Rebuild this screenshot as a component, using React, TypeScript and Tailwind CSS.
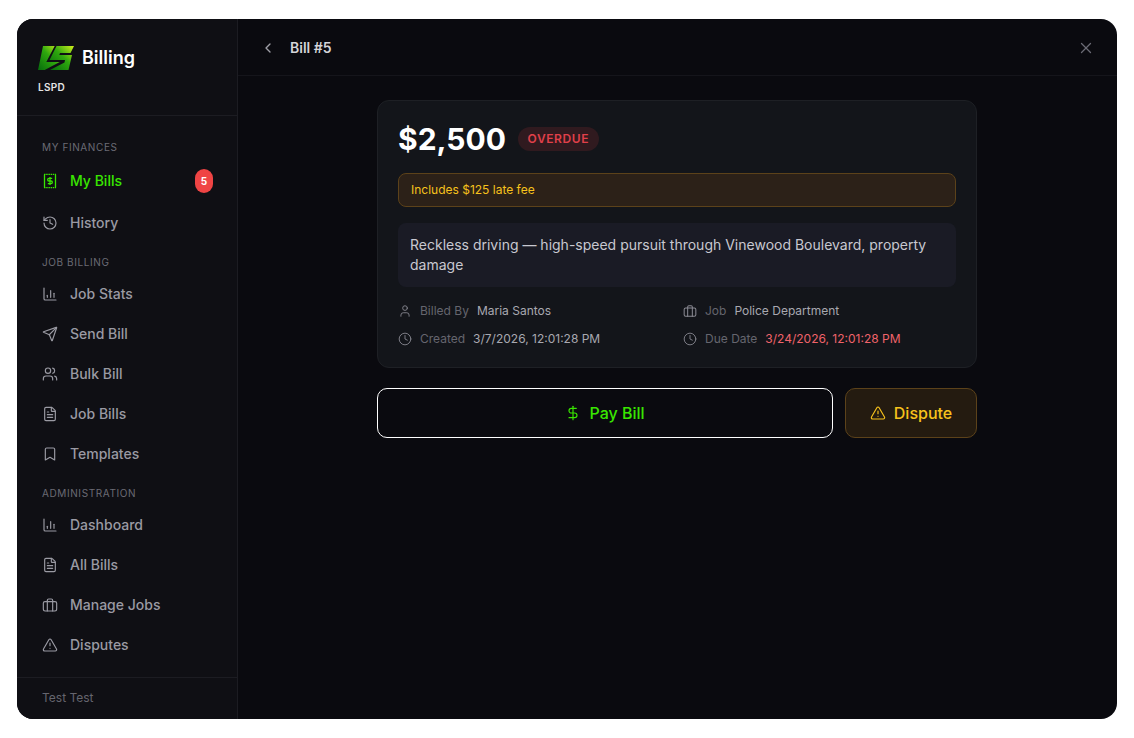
import type { ReactNode } from "react";
import {
  Bookmark,
  ChevronLeft,
  Clock,
  DollarSign,
  FileText,
  History,
  Send,
  TriangleAlert,
  User,
  Users,
  X,
} from "lucide-react";

const Stats = ({ size = 16 }: { size?: number }) => (
  <svg width={size} height={size} viewBox="0 0 24 24" fill="none" stroke="currentColor" strokeWidth={1.75} strokeLinecap="round" strokeLinejoin="round">
    <path d="M3 3v16a2 2 0 0 0 2 2h16" />
    <path d="M8 17v-3" />
    <path d="M13 17V7" />
    <path d="M18 17v-6" />
  </svg>
);

const Jobs = ({ size = 16 }: { size?: number }) => (
  <svg width={size} height={size} viewBox="0 0 24 24" fill="none" stroke="currentColor" strokeWidth={1.75} strokeLinecap="round" strokeLinejoin="round">
    <rect x="2" y="7" width="20" height="14" rx="2.5" />
    <path d="M8 21V5a2 2 0 0 1 2-2h4a2 2 0 0 1 2 2v16" />
  </svg>
);

const BillIcon = () => (
  <svg width={16} height={16} viewBox="0 0 16 16" fill="none" stroke="currentColor">
    <path d="M2.5 1.5v13M13.5 1.5v13" strokeWidth={1.3} />
    <path d="M2 1.3h12M2 14.7h12" strokeWidth={1.3} strokeDasharray="1.5 0.7" />
    <path d="M10.2 5.3H7a1.35 1.35 0 0 0 0 2.7h2a1.35 1.35 0 0 1 0 2.7H5.8M8 4v8" strokeWidth={1.3} />
  </svg>
);

const Logo = () => (
  <svg width={36} height={24} viewBox="0 0 36 24">
    <defs>
      <linearGradient id="lsGrad" x1="0" y1="1" x2="1" y2="0">
        <stop offset="0" stopColor="#056b0c" />
        <stop offset="0.55" stopColor="#2fa80e" />
        <stop offset="1" stopColor="#d2f01c" />
      </linearGradient>
    </defs>
    <path fill="url(#lsGrad)" d="M5 0H16.7L8.3 16H21.7L6.7 24H0Z" />
    <path fill="url(#lsGrad)" d="M18.5 0H36L32.5 7H22L21.3 9H34L30.5 24H12L26.5 16.5L27 14H11.5Z" />
  </svg>
);

function SectionLabel({ children }: { children: ReactNode }) {
  return (
    <div className="mt-3 mb-[5px] px-[5px] h-3.5 text-[10px] leading-[14px] font-normal tracking-[0.06em] uppercase text-[#6b6b75]">
      {children}
    </div>
  );
}

function NavItem({ icon, label }: { icon: ReactNode; label: string }) {
  return (
    <div className="flex h-10 items-center gap-3 pl-[5px] text-sm font-medium text-[#9a9aa3]">
      <span className="flex w-4 justify-center">{icon}</span>
      {label}
    </div>
  );
}

function Meta({ icon, label, value, valueClass }: { icon: ReactNode; label: string; value: string; valueClass: string }) {
  return (
    <div className="flex h-4 items-center text-xs">
      <span className="mr-2 text-[#8a8a93]">{icon}</span>
      <span className="mr-2 text-[#65656e]">{label}</span>
      <span className={valueClass}>{value}</span>
    </div>
  );
}

export default function App() {
  return (
    <div className="h-[738px] w-[1134px] bg-white px-[17px] pt-[19px] font-['Inter',sans-serif]">
      <div className="flex h-[700px] w-[1100px] overflow-hidden rounded-2xl bg-[#0a0a0f]">
        {/* sidebar */}
        <aside className="flex w-[221px] flex-col border-r border-[#1c1c22] bg-[#0f0f14]">
          <div className="h-[97px] border-b border-[#1c1c22] pl-[21px] pt-[27px]">
            <div className="flex h-6 items-center gap-2">
              <Logo />
              <span className="text-lg font-semibold text-white">Billing</span>
            </div>
            <div className="mt-2.5 text-[10px] leading-[14px] font-semibold tracking-[0.03em] text-[#e5e5e5]">LSPD</div>
          </div>

          <nav className="flex-1 pl-5 pr-6 pt-3">
            <SectionLabel>My Finances</SectionLabel>
            <div className="flex h-11 items-center gap-3 pl-[5px] text-sm font-medium text-[#39e600]">
              <span className="flex w-4 justify-center">
                <BillIcon />
              </span>
              <span className="flex-1">My Bills</span>
              <span className="flex h-6 w-[18px] items-center justify-center rounded-full bg-[#ef4444] text-[10px] font-bold text-white">5</span>
            </div>
            <NavItem icon={<History size={16} strokeWidth={1.75} />} label="History" />

            <SectionLabel>Job Billing</SectionLabel>
            <NavItem icon={<Stats />} label="Job Stats" />
            <NavItem icon={<Send size={16} strokeWidth={1.75} />} label="Send Bill" />
            <NavItem icon={<Users size={16} strokeWidth={1.75} />} label="Bulk Bill" />
            <NavItem icon={<FileText size={16} strokeWidth={1.75} />} label="Job Bills" />
            <NavItem icon={<Bookmark size={16} strokeWidth={1.75} />} label="Templates" />

            <SectionLabel>Administration</SectionLabel>
            <NavItem icon={<Stats />} label="Dashboard" />
            <NavItem icon={<FileText size={16} strokeWidth={1.75} />} label="All Bills" />
            <NavItem icon={<Jobs />} label="Manage Jobs" />
            <NavItem icon={<TriangleAlert size={16} strokeWidth={1.75} />} label="Disputes" />
          </nav>

          <div className="flex h-[42px] items-center border-t border-[#1c1c22] pb-0.5 pl-[25px] text-xs text-[#65656e]">Test Test</div>
        </aside>

        {/* main */}
        <main className="flex min-w-0 flex-1 flex-col">
          <header className="flex h-[57px] items-center border-b border-[#15151b] pl-[22px] pr-[22px] pt-0.5">
            <ChevronLeft size={16} strokeWidth={2} className="text-[#a0a0a8]" />
            <span className="ml-3.5 flex-1 text-sm font-semibold text-[#d4d4d8]">Bill #5</span>
            <X size={18} strokeWidth={1.75} className="text-[#6b6b75]" />
          </header>

          <div className="ml-[139px] mt-6 w-[600px]">
            <div className="rounded-xl border border-[#1e2025] bg-[#13151a] p-5">
              <div className="flex h-9 items-center gap-3">
                <span className="text-[30px] font-bold text-white">$2,500</span>
                <span className="flex h-6 items-center rounded-full bg-[#301a1f] px-[9.5px] text-xs font-semibold tracking-[0.05em] text-[#e0404a]">OVERDUE</span>
              </div>

              <div className="mt-4 flex h-[34px] items-center rounded-lg border border-[#5c421a] bg-[#2c2118] px-3 text-xs font-normal text-[#f7c21c]">
                Includes $125 late fee
              </div>

              <div className="mt-4 rounded-lg bg-[#1a1b25] px-3 py-3 text-sm leading-5 font-normal text-[#c8c8d0]">
                Reckless driving — high-speed pursuit through Vinewood Boulevard, property damage
              </div>

              <div className="mt-4 grid grid-cols-[285px_1fr] gap-y-3">
                <Meta icon={<User size={14} strokeWidth={1.5} />} label="Billed By" value="Maria Santos" valueClass="text-[#a8a8b0]" />
                <Meta icon={<Jobs size={14} />} label="Job" value="Police Department" valueClass="text-[#a8a8b0]" />
                <Meta icon={<Clock size={14} strokeWidth={1.5} />} label="Created" value="3/7/2026, 12:01:28 PM" valueClass="text-[#a8a8b0]" />
                <Meta icon={<Clock size={14} strokeWidth={1.5} />} label="Due Date" value="3/24/2026, 12:01:28 PM" valueClass="text-[#f0636a]" />
              </div>
            </div>

            <div className="mt-5 flex gap-3">
              <button className="flex h-[50px] flex-1 items-center justify-center gap-2 rounded-[10px] border border-white bg-[#0a0a0f] text-base font-medium text-[#39e600]">
                <DollarSign size={16} strokeWidth={1.75} />
                Pay Bill
              </button>
              <button className="flex h-[50px] w-[132px] items-center justify-center gap-2 rounded-[10px] border border-[#5c421a] bg-[#241b10] text-base font-medium text-[#f7c21c]">
                <TriangleAlert size={16} strokeWidth={1.75} />
                Dispute
              </button>
            </div>
          </div>
        </main>
      </div>
    </div>
  );
}
